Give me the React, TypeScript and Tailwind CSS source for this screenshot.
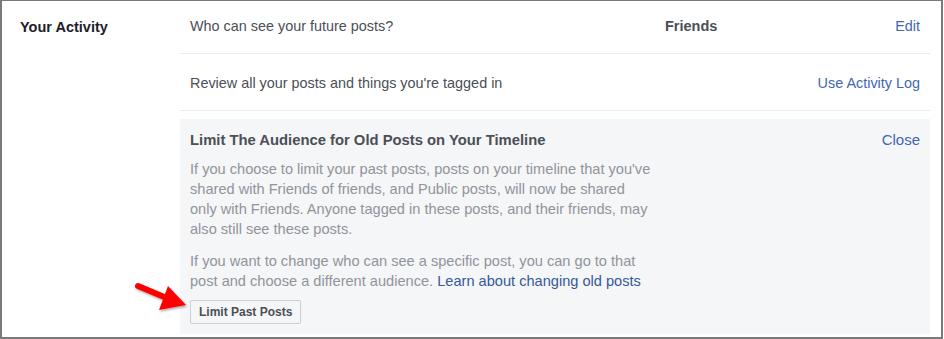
import React from "react";

export default function App() {
  return (
    <div
      className="relative w-[943px] h-[339px] bg-white border-t border-l-2 border-r-2 border-b-2 border-[#7a7a7a] flex"
      style={{ fontFamily: '"Liberation Sans", Arial, sans-serif' }}
    >
      <div className="w-[160px] ml-[18px] pt-[17px] text-[14.5px] leading-[18px] font-bold text-[#1d2129]">
        Your Activity
      </div>
      <div className="w-[750px] flex flex-col">
        <div className="h-[53px] border-b border-[#e9ebee] flex items-center px-[10px] text-[14.4px] text-[#4b4f56]">
          <div className="w-[475px]">Who can see your future posts?</div>
          <div className="font-bold text-[14.5px]">Friends</div>
          <div className="flex-1 text-right text-[#4267b2]">Edit</div>
        </div>
        <div className="h-[57px] border-b border-[#e9ebee] flex items-center px-[10px] pt-[3px] text-[14.4px] text-[#4b4f56]">
          <div className="flex-1">Review all your posts and things you're tagged in</div>
          <div className="text-[#4267b2]">Use Activity Log</div>
        </div>
        <div className="mt-[8px] bg-[#f5f6f7] pt-[12px] pb-[10px] px-[10px]">
          <div className="flex justify-between items-center leading-[18px]">
            <div className="font-bold text-[14.8px] text-[#4b4f56]">Limit The Audience for Old Posts on Your Timeline</div>
            <div className="text-[15px] text-[#4267b2]">Close</div>
          </div>
          <p className="mt-[10px] w-[490px] text-[14.6px] leading-[20px] text-[#90949c]">
            If you choose to limit your past posts, posts on your timeline that you've
            <br />
            shared with Friends of friends, and Public posts, will now be shared
            <br />
            only with Friends. Anyone tagged in these posts, and their friends, may
            <br />
            also still see these posts.
          </p>
          <p className="mt-[12px] w-[490px] text-[14.6px] leading-[20px] text-[#90949c]">
            If you want to change who can see a specific post, you can go to that
            <br />
            post and choose a different audience.{" "}
            <span className="text-[#365899]">Learn about changing old posts</span>
          </p>
          <button className="mt-[9px] h-[24px] px-[8px] border border-[#ccd0d5] rounded-[2px] bg-[#f5f6f7] text-[12px] font-bold text-[#4b4f56] leading-[22px]">
            Limit Past Posts
          </button>
        </div>
      </div>
      <svg className="absolute left-[129px] top-[277px]" width="64" height="38" viewBox="0 0 64 38">
        <defs>
          <filter id="sh" x="-20%" y="-20%" width="140%" height="140%">
            <feDropShadow dx="1" dy="1.5" stdDeviation="1" floodColor="#000" floodOpacity="0.35" />
          </filter>
        </defs>
        <g filter="url(#sh)">
          <line x1="7" y1="8" x2="38" y2="21" stroke="#ff0000" strokeWidth="6" strokeLinecap="round" />
          <polygon points="55,27 37,8 28,32" fill="#ff0000" />
        </g>
      </svg>
    </div>
  );
}
